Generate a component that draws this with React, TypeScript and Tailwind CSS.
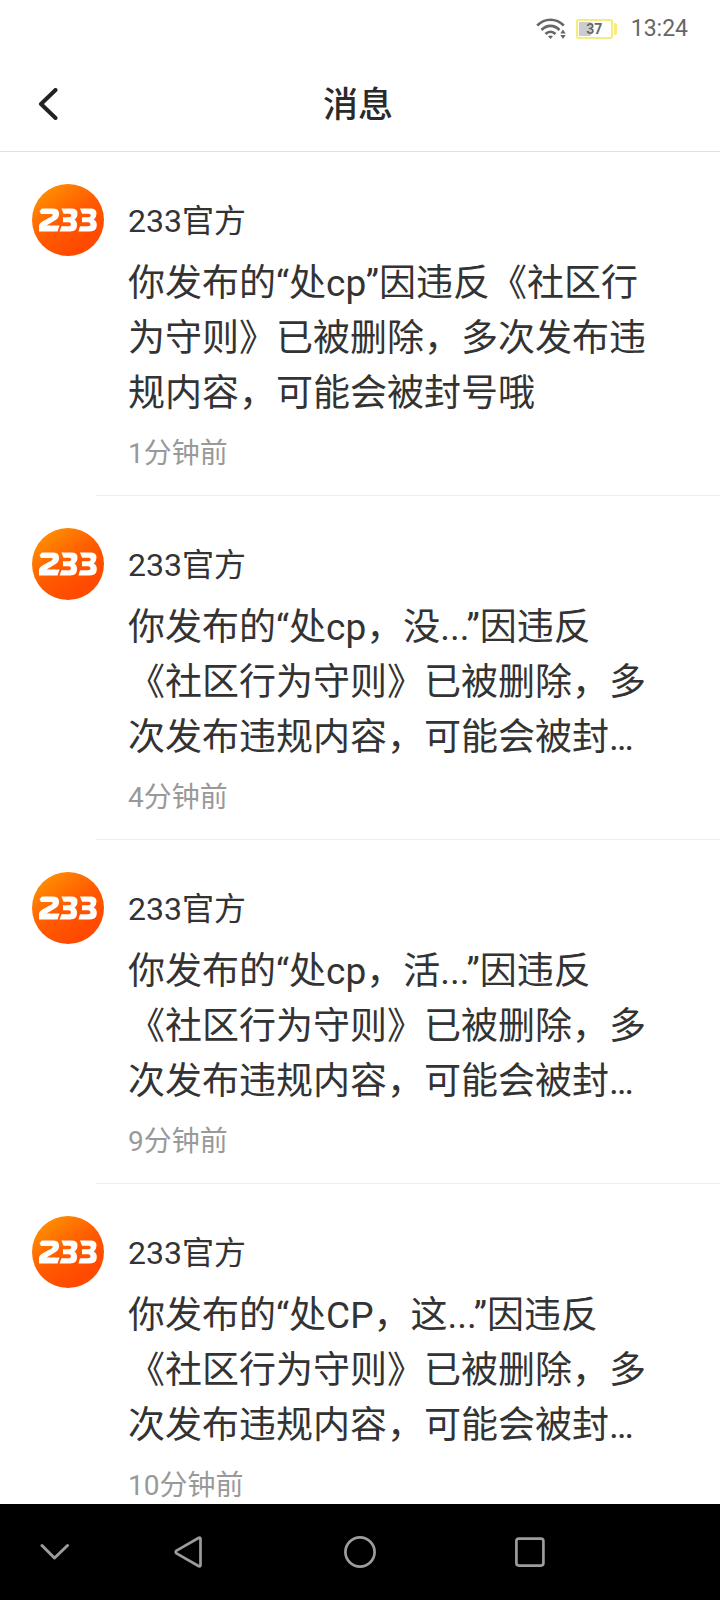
import React from 'react'

interface Message {
  id: number
  sender: string
  content: string
  time: string
}

const messages: Message[] = [
  {
    id: 1,
    sender: '233官方',
    content: '你发布的“处cp”因违反《社区行为守则》已被删除，多次发布违规内容，可能会被封号哦',
    time: '1分钟前',
  },
  {
    id: 2,
    sender: '233官方',
    content: '你发布的“处cp，没...”因违反《社区行为守则》已被删除，多次发布违规内容，可能会被封…',
    time: '4分钟前',
  },
  {
    id: 3,
    sender: '233官方',
    content: '你发布的“处cp，活...”因违反《社区行为守则》已被删除，多次发布违规内容，可能会被封…',
    time: '9分钟前',
  },
  {
    id: 4,
    sender: '233官方',
    content: '你发布的“处CP，这...”因违反《社区行为守则》已被删除，多次发布违规内容，可能会被封…',
    time: '10分钟前',
  },
]

const StatusBar: React.FC = () => (
  <div className="flex h-14 shrink-0 items-center justify-end pt-0.5 pr-8 text-[#666]">
    <svg className="h-6 w-8" viewBox="0 0 32 24" fill="none" stroke="currentColor" aria-hidden="true">
      <path d="M1.200 8.500C9 0.800 20 0.800 27.800 8.500" strokeWidth={2.7} />
      <path d="M5.500 13C11 7.600 18 7.600 23.500 13" strokeWidth={2.7} />
      <path d="M9.500 17C12.500 14 16.500 14 19.500 17" strokeWidth={2.7} />
      <path d="M12 19.200q2.500-1.600 5 0l-2.500 2.800z" fill="currentColor" stroke="none" />
      <path d="M27 12.500l2.700 4h-5.400zM27 22l2.700-4h-5.400z" fill="currentColor" stroke="none" />
    </svg>
    <div className="ml-2 flex items-center">
      <div className="relative flex h-5 w-[37px] items-center justify-center rounded-xs border-2 border-[#f5ec80]">
        <span className="absolute inset-y-px left-px w-3 bg-[#ccc]" />
        <span className="relative text-sm leading-4 font-bold">37</span>
      </div>
      <span className="ml-px h-3 w-[3px] rounded-r-xs bg-[#f5ec80]" />
    </div>
    <span className="ml-3.5 text-[23px] leading-8">13:24</span>
  </div>
)

const Avatar: React.FC = () => (
  <svg className="size-[72px] shrink-0" viewBox="0 0 72 72" aria-hidden="true">
    <defs>
      <linearGradient id="avatar-bg" x1="0.1" y1="0.05" x2="0.7" y2="0.85">
        <stop offset="0" stopColor="#ff9500" />
        <stop offset="0.6" stopColor="#ff5a00" />
        <stop offset="1" stopColor="#ff4a00" />
      </linearGradient>
    </defs>
    <circle cx="36" cy="36" r="36" fill="url(#avatar-bg)" />
    <path
      fill="#fff"
      d="M10 24.500H21.500Q27.500 24.500 27 30.500Q26.500 35 22 37L14.500 41.500H27.500L25.500 47.500H7V42.500Q7 39.500 10 37.800L19.500 32.500Q21.500 31 20 30H9L7.500 27Z"
    />
    <g fill="#fff">
      <path d="M29.500 24.500H39.500Q45.500 24.500 45.500 29.500Q45.500 33.500 42.500 35.500Q45 37 45 41Q45 47.500 38.500 47.500H27.500L29.500 42.300H36.500Q39 42.300 39 40.300Q39 38.200 36.500 38.200H31V33.200H37Q39.300 33.200 39.300 31.500Q39.300 29.800 37 29.800H31.500Z" />
      <path d="M48 24.500H58.500Q64.500 24.500 64.500 29.500Q64.500 33.500 61.800 35.500Q64.800 37 64.800 41Q64.800 47.500 58 47.500H46.500L48 42.300H56Q58.500 42.300 58.500 40.300Q58.500 38.200 56 38.200H50V33.200H56.500Q58.800 33.200 58.800 31.500Q58.800 29.800 56.500 29.800H50Z" />
    </g>
  </svg>
)

const MessageItem: React.FC<{ message: Message }> = ({ message }) => (
  <li>
    <article className="flex gap-6 pt-8 pr-16 pb-5 pl-8">
      <Avatar />
      <div className="min-w-0 flex-1 pt-4">
        <h2 className="text-[32px] leading-[42px]">{message.sender}</h2>
        <p className="mt-3.5 text-[37px] leading-[55px]">{message.content}</p>
        <time className="mt-3 block text-[28px] leading-[42px] text-[#999]">{message.time}</time>
      </div>
    </article>
    <div className="ml-24 h-px bg-[#eee]" />
  </li>
)

const NavBar: React.FC = () => (
  <nav className="h-24 shrink-0 bg-black text-[#9c9c9c]">
    <div className="flex h-full items-center pl-10">
      <button aria-label="收起" className="mr-[102px]">
        <svg className="size-8" viewBox="0 0 32 32" fill="none" stroke="currentColor" strokeWidth={3} strokeLinecap="round" strokeLinejoin="round">
          <path d="M2 9.500L14.500 22L27.500 9.500" />
        </svg>
      </button>
      <button aria-label="返回" className="mr-[138px]">
        <svg className="size-8" viewBox="0 0 32 32" fill="none" stroke="currentColor" strokeWidth={2.7} strokeLinejoin="round">
          <path d="M26.500 3Q26.500 1 24.500 2L2.500 14.600Q0.800 16 2.500 17.400L24.500 30Q26.500 31 26.500 29Z" />
        </svg>
      </button>
      <button aria-label="主页" className="mr-[138px]">
        <svg className="size-8" viewBox="0 0 32 32" fill="none" stroke="currentColor" strokeWidth={2.7}>
          <circle cx="16" cy="16" r="14.600" />
        </svg>
      </button>
      <button aria-label="最近任务">
        <svg className="size-8" viewBox="0 0 32 32" fill="none" stroke="currentColor" strokeWidth={2.7}>
          <rect x="2.400" y="2.600" width="27" height="27" rx="2.500" />
        </svg>
      </button>
    </div>
  </nav>
)

export default function App() {
  return (
    <div className="flex h-screen flex-col bg-white font-[Roboto,'Noto_Sans_CJK_SC',sans-serif] text-[#333]" lang="zh-CN">
      <StatusBar />
      <header className="grid h-24 shrink-0 grid-cols-[1fr_auto_1fr] items-center border-b border-[#e0e0e0] pr-9 pl-8">
        <button aria-label="返回" className="justify-self-start">
          <svg className="size-8" viewBox="0 0 32 32" fill="none" stroke="#222" strokeWidth={4} strokeLinecap="round" strokeLinejoin="round">
            <path d="M23.500 2L9 16L23.500 30" />
          </svg>
        </button>
        <h1 className="pt-1 text-[35px] leading-[48px] font-medium text-[#2a2a2a]">消息</h1>
      </header>
      <main className="min-h-0 flex-1 overflow-hidden">
        <ul>
          {messages.map((m) => (
            <MessageItem key={m.id} message={m} />
          ))}
        </ul>
      </main>
      <NavBar />
    </div>
  )
}
